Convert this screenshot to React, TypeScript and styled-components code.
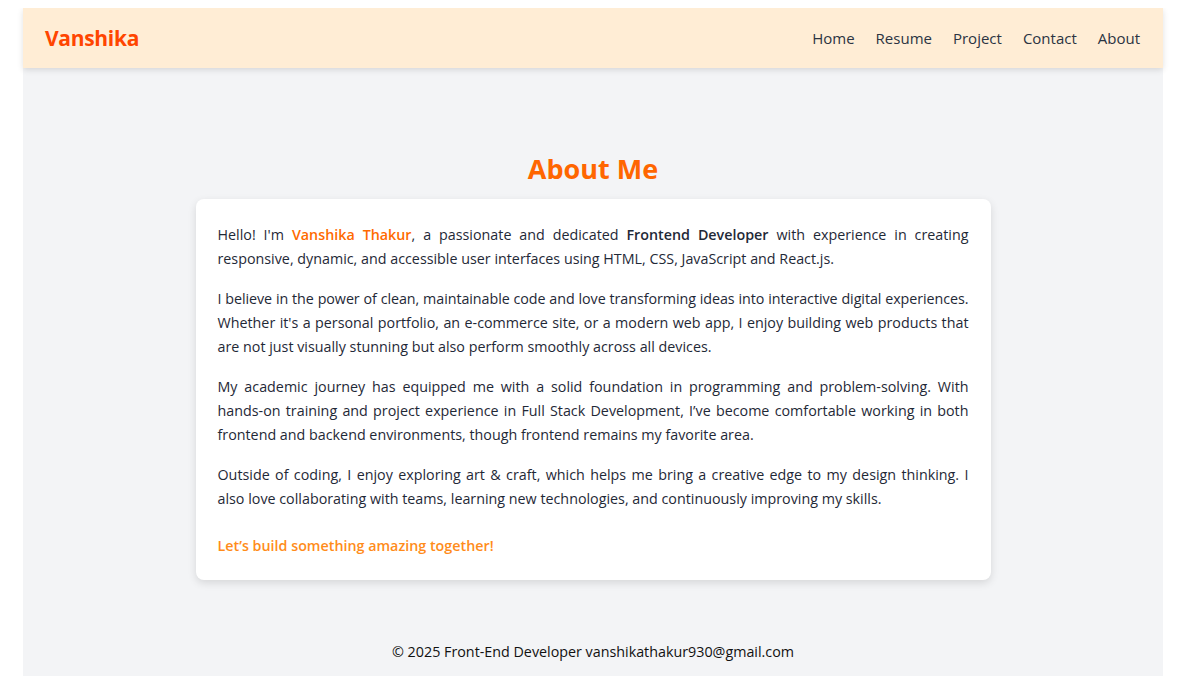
import React from "react";
import styled, { createGlobalStyle } from "styled-components";

const Global = createGlobalStyle`
  html, body { background: #ffffff; }
  body {
    margin: 8px;
    font-family: "Open Sans", "Noto Sans", sans-serif;
    color: #1f2937;
  }
  * { box-sizing: border-box; }
`;

const Page = styled.div`
  width: 1140px;
  margin-left: 15px;
  height: 668px;
  background: #f3f4f6;
  display: flex;
  flex-direction: column;
`;

const Header = styled.header`
  height: 60px;
  flex: none;
  background: #ffedd5;
  box-shadow: 0 2px 6px rgba(0, 0, 0, 0.12);
  display: flex;
  align-items: center;
  justify-content: space-between;
  padding: 0 23px 0 22px;
  position: relative;
  z-index: 1;
`;

const Logo = styled.div`
  font-size: 21px;
  font-weight: 700;
  color: #ff4500;
  letter-spacing: -0.3px;
`;

const Nav = styled.nav`
  display: flex;
  gap: 21px;
`;

const NavLink = styled.a`
  font-size: 15px;
  font-weight: 500;
  color: #2b3442;
  text-decoration: none;
`;

const Main = styled.main`
  flex: 1;
  display: flex;
  flex-direction: column;
  align-items: center;
  padding-top: 82px;
`;

const Title = styled.h1`
  margin: 0 0 11px;
  font-size: 27px;
  line-height: 38px;
  font-weight: 700;
  color: #ff6600;
`;

const Card = styled.section`
  width: 795px;
  background: #ffffff;
  border-radius: 8px;
  box-shadow: 0 3px 8px rgba(0, 0, 0, 0.12);
  padding: 24px 22px 22px;
`;

const Para = styled.p`
  margin: 0 0 16px;
  font-size: 14.3px;
  line-height: 24px;
  color: #1f2937;
`;

const Line = styled.span<{ $last?: boolean; $tight?: boolean }>`
  display: block;
  white-space: nowrap;
  letter-spacing: ${(p) => (p.$tight ? "-0.06px" : "normal")};
  text-align: ${(p) => (p.$last ? "left" : "justify")};
  text-align-last: ${(p) => (p.$last ? "left" : "justify")};
`;

const Name = styled.span`
  color: #ff6a00;
  font-weight: 600;
`;

const Strong = styled.strong`
  font-weight: 600;
  color: #1f2937;
`;

const Cta = styled.p`
  margin: 23px 0 0;
  font-size: 14.3px;
  line-height: 24px;
  font-weight: 600;
  color: #ff8c1a;
`;

const Footer = styled.footer`
  height: 50px;
  flex: none;
  display: flex;
  justify-content: center;
  align-items: center;
  font-size: 14.3px;
  color: #111111;
`;

export default function App() {
  return (
    <>
      <Global />
      <Page>
        <Header>
          <Logo>Vanshika</Logo>
          <Nav>
            <NavLink href="#">Home</NavLink>
            <NavLink href="#">Resume</NavLink>
            <NavLink href="#">Project</NavLink>
            <NavLink href="#">Contact</NavLink>
            <NavLink href="#">About</NavLink>
          </Nav>
        </Header>
        <Main>
          <Title>About Me</Title>
          <Card>
            <Para>
              <Line>
                Hello! I'm <Name>Vanshika Thakur</Name>, a passionate and dedicated{" "}
                <Strong>Frontend Developer</Strong> with experience in creating
              </Line>
              <Line $last>
                responsive, dynamic, and accessible user interfaces using HTML, CSS, JavaScript and React.js.
              </Line>
            </Para>
            <Para>
              <Line $tight>
                I believe in the power of clean, maintainable code and love transforming ideas into interactive digital experiences.
              </Line>
              <Line>
                Whether it's a personal portfolio, an e-commerce site, or a modern web app, I enjoy building web products that
              </Line>
              <Line $last>
                are not just visually stunning but also perform smoothly across all devices.
              </Line>
            </Para>
            <Para>
              <Line>
                My academic journey has equipped me with a solid foundation in programming and problem-solving. With
              </Line>
              <Line>
                hands-on training and project experience in Full Stack Development, I’ve become comfortable working in both
              </Line>
              <Line $last>
                frontend and backend environments, though frontend remains my favorite area.
              </Line>
            </Para>
            <Para>
              <Line>
                Outside of coding, I enjoy exploring art &amp; craft, which helps me bring a creative edge to my design thinking. I
              </Line>
              <Line $last>
                also love collaborating with teams, learning new technologies, and continuously improving my skills.
              </Line>
            </Para>
            <Cta>Let’s build something amazing together!</Cta>
          </Card>
        </Main>
        <Footer>© 2025 Front-End Developer vanshikathakur930@gmail.com</Footer>
      </Page>
    </>
  );
}
